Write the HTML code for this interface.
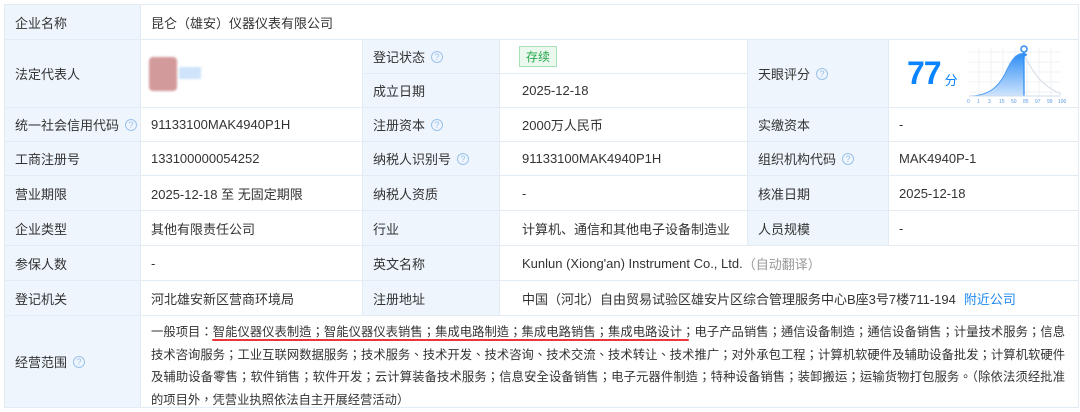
<!DOCTYPE html>
<html><head><meta charset="utf-8"><style>
*{margin:0;padding:0;box-sizing:border-box}
body{width:1080px;height:412px;background:#fff;font-family:"Liberation Sans","Noto Sans CJK SC",sans-serif;font-size:13px;color:#333;position:relative;overflow:hidden}
.c{position:absolute;border-right:1px solid #e3ebf5;border-bottom:1px solid #e3ebf5;display:flex;align-items:center;padding-left:10px;white-space:nowrap}
.l{background:#eef5fd;color:#333}
.q{display:inline-block;width:12px;height:12px;border:1px solid #9cc3ea;border-radius:50%;font-size:9px;color:#9cc3ea;text-align:center;line-height:10px;margin-left:6px}
.tag{border:1px solid #a8e0b8;background:#eaf8ee;color:#23a84a;padding:1px 6px;font-size:12px}
.sc{font-family:"Liberation Sans","Noto Sans CJK TC",sans-serif;font-size:12.3px}
.ln{width:914px;height:22.5px;line-height:22.5px;text-align:justify;text-align-last:justify;text-justify:inter-character;white-space:normal;overflow:hidden}
</style></head><body>
<div style="position:absolute;left:4px;top:4px;width:1075px;height:404px;border-top:1px solid #e3ebf5;border-left:1px solid #e3ebf5"></div>
<div class="c l" style="left:5px;top:5px;width:136px;height:35px">企业名称</div>
<div class="c" style="left:141px;top:5px;width:938px;height:35px">昆仑（雄安）仪器仪表有限公司</div>
<div class="c l" style="left:5px;top:40px;width:136px;height:68px">法定代表人</div>
<div class="c" style="left:141px;top:40px;width:222px;height:68px;padding-left:0">
<div style="position:relative;width:80px;height:34px"><div style="position:absolute;left:8px;top:0;width:28px;height:34px;background:#d39a9c;border-radius:4px;filter:blur(1px)"></div><div style="position:absolute;left:38px;top:10px;width:22px;height:12px;background:#cfe3fb;filter:blur(1px)"></div></div></div>
<div class="c l" style="left:363px;top:40px;width:137px;height:34px">登记状态<span class="q">?</span></div>
<div class="c" style="left:500px;top:40px;width:248px;height:34px;align-items:flex-start;padding-top:6px;padding-left:19px"><span class="tag">存续</span></div>
<div class="c l" style="left:363px;top:74px;width:137px;height:34px">成立日期</div>
<div class="c" style="left:500px;top:74px;width:248px;height:34px;padding-left:22px">2025-12-18</div>
<div class="c l" style="left:748px;top:40px;width:141px;height:68px">天眼评分<span class="q">?</span></div>
<div class="c" style="left:889px;top:40px;width:190px;height:68px;padding-left:18px">
<span style="font-size:32px;font-weight:bold;color:#0a84ff;letter-spacing:-1px">77</span><span style="color:#0a84ff;font-size:13px;margin:12px 0 0 4px">分</span>
<svg width="104" height="60" viewBox="0 0 104 60" style="position:absolute;left:78px;top:4px">
<g stroke="#eef1f5" stroke-width="1"><path d="M2 8H94M2 18H94M2 28H94M2 38H94M2 48H94M12 4V52M24 4V52M36 4V52M48 4V52M60 4V52M72 4V52M84 4V52"/></g>
<defs><linearGradient id="g" x1="0" y1="0" x2="0" y2="1"><stop offset="0" stop-color="#2b8cf5"/><stop offset="1" stop-color="#cfe4fd"/></linearGradient></defs>
<path d="M2 52C20 52 30 45 38 30C45 14 50 9 56 9C60 9 62 11 57 13L57 52Z" fill="url(#g)"/>
<path d="M57 12C64 22 70 40 94 50" stroke="#d5dce6" fill="none"/>
<path d="M2 52C20 52 30 45 38 30C45 14 50 9 56 10" stroke="#4a9cf6" fill="none"/>
<line x1="57" y1="6" x2="57" y2="52" stroke="#2b8cf5" stroke-width="1.2"/><circle cx="57" cy="5" r="3" fill="#fff" stroke="#2b8cf5" stroke-width="1.5"/>
<path d="M2 52H94" stroke="#cfdbe8"/>
<g font-size="5" fill="#5a9be6"><text x="0" y="59">0</text><text x="10" y="59">1</text><text x="21" y="59">3</text><text x="32" y="59">15</text><text x="44" y="59">50</text><text x="56" y="59">85</text><text x="68" y="59">97</text><text x="80" y="59">99</text><text x="91" y="59">100</text></g></svg></div>
<div class="c l" style="left:5px;top:108px;width:136px;height:34px">统一社会信用代码<span class="q">?</span></div>
<div class="c" style="left:141px;top:108px;width:222px;height:34px">91133100MAK4940P1H</div>
<div class="c l" style="left:363px;top:108px;width:137px;height:34px">注册资本<span class="q">?</span></div>
<div class="c" style="left:500px;top:108px;width:248px;height:34px;padding-left:22px">2000万人民币</div>
<div class="c l" style="left:748px;top:108px;width:141px;height:34px">实缴资本</div>
<div class="c" style="left:889px;top:108px;width:190px;height:34px">-</div>
<div class="c l" style="left:5px;top:142px;width:136px;height:34px">工商注册号</div>
<div class="c" style="left:141px;top:142px;width:222px;height:34px">133100000054252</div>
<div class="c l" style="left:363px;top:142px;width:137px;height:34px">纳税人识别号<span class="q">?</span></div>
<div class="c" style="left:500px;top:142px;width:248px;height:34px;padding-left:22px">91133100MAK4940P1H</div>
<div class="c l" style="left:748px;top:142px;width:141px;height:34px">组织机构代码<span class="q">?</span></div>
<div class="c" style="left:889px;top:142px;width:190px;height:34px">MAK4940P-1</div>
<div class="c l" style="left:5px;top:176px;width:136px;height:35px">营业期限</div>
<div class="c" style="left:141px;top:176px;width:222px;height:35px">2025-12-18 至 无固定期限</div>
<div class="c l" style="left:363px;top:176px;width:137px;height:35px">纳税人资质</div>
<div class="c" style="left:500px;top:176px;width:248px;height:35px;padding-left:22px">-</div>
<div class="c l" style="left:748px;top:176px;width:141px;height:35px">核准日期</div>
<div class="c" style="left:889px;top:176px;width:190px;height:35px">2025-12-18</div>
<div class="c l" style="left:5px;top:211px;width:136px;height:35px">企业类型</div>
<div class="c" style="left:141px;top:211px;width:222px;height:35px">其他有限责任公司</div>
<div class="c l" style="left:363px;top:211px;width:137px;height:35px">行业</div>
<div class="c" style="left:500px;top:211px;width:248px;height:35px;padding-left:22px">计算机、通信和其他电子设备制造业</div>
<div class="c l" style="left:748px;top:211px;width:141px;height:35px">人员规模</div>
<div class="c" style="left:889px;top:211px;width:190px;height:35px">-</div>
<div class="c l" style="left:5px;top:246px;width:136px;height:35px">参保人数</div>
<div class="c" style="left:141px;top:246px;width:222px;height:35px">-</div>
<div class="c l" style="left:363px;top:246px;width:137px;height:35px">英文名称</div>
<div class="c" style="left:500px;top:246px;width:579px;height:35px;padding-left:22px">Kunlun (Xiong'an) Instrument Co., Ltd.<span style="color:#999">（自动翻译）</span></div>
<div class="c l" style="left:5px;top:281px;width:136px;height:35px">登记机关</div>
<div class="c" style="left:141px;top:281px;width:222px;height:35px">河北雄安新区营商环境局</div>
<div class="c l" style="left:363px;top:281px;width:137px;height:35px">注册地址</div>
<div class="c" style="left:500px;top:281px;width:579px;height:35px;padding-left:22px">中国（河北）自由贸易试验区雄安片区综合管理服务中心B座3号7楼711-194<span style="color:#1e88f0;margin-left:8px">附近公司</span></div>
<div class="c l" style="left:5px;top:316px;width:136px;height:92px">经营范围<span class="q">?</span></div>
<div class="c sc" style="left:141px;top:316px;width:938px;height:92px;display:block;padding:5px 8px 0 10px;white-space:normal">
<div class="ln">一般项目：智能仪器仪表制造；智能仪器仪表销售；集成电路制造；集成电路销售；集成电路设计；电子产品销售；通信设备制造；通信设备销售；计量技术服务；信息</div>
<div class="ln">技术咨询服务；工业互联网数据服务；技术服务、技术开发、技术咨询、技术交流、技术转让、技术推广；对外承包工程；计算机软硬件及辅助设备批发；计算机软硬件</div>
<div class="ln">及辅助设备零售；软件销售；软件开发；云计算装备技术服务；信息安全设备销售；电子元器件制造；特种设备销售；装卸搬运；运输货物打包服务。（除依法须经批准</div>
<div style="height:22.5px;line-height:22.5px;white-space:nowrap">的项目外，凭营业执照依法自主开展经营活动）</div>
</div>
<div style="position:absolute;left:212px;top:339px;width:477px;height:2px;background:#e8383d;border-radius:1px"></div>
</body></html>
